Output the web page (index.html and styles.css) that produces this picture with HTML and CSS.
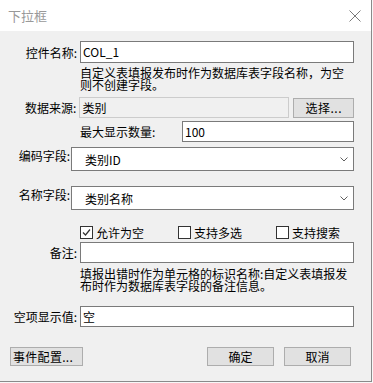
FILE: index.html
```html
<!DOCTYPE html>
<html lang="zh-CN">
  <head>
    <meta charset="UTF-8" />
    <title>下拉框</title>
    <link rel="stylesheet" href="styles.css">
  </head>
  <body>
    <div class="dialog">
      <div class="titlebar">
        <span class="title">下拉框</span>
        <svg class="close" width="12" height="12" viewBox="0 0 12 12">
          <path d="M0.5 0.5 L11.5 11.5 M11.5 0.5 L0.5 11.5" stroke="#7a7a7a" stroke-width="1" fill="none" />
        </svg>
      </div>

      <div class="content">
        <!-- 控件名称 -->
        <div class="row row-name">
          <label class="label">控件名称:</label>
          <div class="input">COL_1</div>
        </div>
        <p class="help help-name">自定义表填报发布时作为数据库表字段名称，为空<br>则不创建字段。</p>

        <!-- 数据来源 -->
        <div class="row row-source">
          <label class="label">数据来源:</label>
          <div class="input input-disabled">类别</div>
          <button class="btn btn-pick">选择...</button>
        </div>

        <div class="row row-max">
          <label class="label-max">最大显示数量:</label>
          <div class="input input-max">100</div>
        </div>

        <!-- 字段选择 -->
        <div class="row row-code">
          <label class="label-field">编码字段:</label>
          <div class="select">
            <span>类别ID</span>
            <svg class="arrow" width="8" height="5" viewBox="0 0 8 5">
              <path d="M0.5 0.5 L4 4 L7.5 0.5" stroke="#606060" fill="none" />
            </svg>
          </div>
        </div>

        <div class="row row-title">
          <label class="label-field">名称字段:</label>
          <div class="select">
            <span>类别名称</span>
            <svg class="arrow" width="8" height="5" viewBox="0 0 8 5">
              <path d="M0.5 0.5 L4 4 L7.5 0.5" stroke="#606060" fill="none" />
            </svg>
          </div>
        </div>

        <div class="row row-checks">
          <span class="check check-empty">
            <span class="box">
              <svg width="11" height="11" viewBox="0 0 11 11">
                <path d="M2 5.5 L4.5 8 L9 2.5" stroke="#333" stroke-width="1.2" fill="none" />
              </svg>
            </span>允许为空
          </span>
          <span class="check check-multi"><span class="box"></span>支持多选</span>
          <span class="check check-search"><span class="box"></span>支持搜索</span>
        </div>

        <!-- 备注 -->
        <div class="row row-remark">
          <label class="label">备注:</label>
          <div class="input"></div>
        </div>
        <p class="help help-remark">填报出错时作为单元格的标识名称:自定义表填报发<br>布时作为数据库表字段的备注信息。</p>

        <div class="row row-blank">
          <label class="label">空项显示值:</label>
          <div class="input">空</div>
        </div>

        <!-- 底部按钮 -->
        <div class="footer">
          <button class="btn btn-event">事件配置...</button>
          <div class="footer-right">
            <button class="btn btn-action">确定</button>
            <button class="btn btn-action">取消</button>
          </div>
        </div>
      </div>
    </div>
  </body>
</html>
```

FILE: styles.css
```css
body {
  margin: 0;
  background-color: #f7f7f7;
  font-family: "Noto Sans CJK SC", "Liberation Sans", sans-serif;
  font-size: 12px;
  color: #000;
}

p {
  margin: 0;
}

.dialog {
  width: 371px;
  height: 381px;
  background-color: #f0f0f0;
  border-right: 1px solid #8a8a8a;
  border-bottom: 1px solid #8a8a8a;
}

.titlebar {
  display: flex;
  align-items: center;
  justify-content: space-between;
  height: 31px;
  padding: 0 10px 0 8px;
  background-color: #fff;
}

.title {
  font-size: 13px;
  color: #999;
}

.close {
  display: block;
}

.content {
  padding: 10px 17px 0 0;
}

.row {
  display: flex;
  align-items: center;
}

.label {
  width: 77px;
  margin-right: 3px;
  text-align: right;
  white-space: nowrap;
}

.input {
  box-sizing: border-box;
  flex: 1;
  height: 21px;
  padding: 0 2px;
  line-height: 19px;
  background-color: #fff;
  border: 1px solid #7a7a7a;
  white-space: nowrap;
}

.row-name .input {
  height: 22px;
  line-height: 20px;
}

.input-disabled {
  flex: none;
  width: 210px;
  background-color: #f0f0f0;
  border-color: #cccccc;
}

.help {
  margin: 4px 0 0 80px;
  line-height: 12px;
  white-space: nowrap;
}

.help-remark {
  margin-top: 5px;
}

.btn {
  box-sizing: border-box;
  height: 19px;
  padding: 0;
  font-family: inherit;
  font-size: 12px;
  line-height: 17px;
  background-color: #e1e1e1;
  border: 1px solid #adadad;
  color: #000;
}

.btn-pick {
  width: 61px;
  height: 20px;
  margin-left: 4px;
  letter-spacing: 0.5px;
}

.row-source {
  margin-top: 6px;
}

.row-max {
  margin-top: 3px;
  padding-left: 80px;
}

.label-max {
  width: 102px;
  white-space: nowrap;
}

.row-code {
  margin-top: 5px;
  align-items: flex-start;
}

.row-title {
  margin-top: 15px;
  align-items: flex-start;
}

.label-field {
  width: 71px;
  padding: 1px 1px 0 0;
  box-sizing: border-box;
  text-align: right;
  line-height: 16px;
  white-space: nowrap;
}

.select {
  box-sizing: border-box;
  flex: 1;
  display: flex;
  align-items: center;
  justify-content: space-between;
  height: 24px;
  padding: 0 5px 0 13px;
  background-color: #fff;
  border: 1px solid #7a7a7a;
}

.arrow {
  display: block;
}

.row-checks {
  margin-top: 15px;
  padding-left: 80px;
  height: 14px;
}

.check {
  display: flex;
  align-items: center;
  white-space: nowrap;
}

.check-empty {
  width: 98px;
}

.check-multi {
  width: 98px;
}

.box {
  box-sizing: border-box;
  display: flex;
  align-items: center;
  justify-content: center;
  width: 13px;
  height: 13px;
  margin-right: 3px;
  background-color: #fff;
  border: 1px solid #333;
}

.row-remark {
  margin-top: 3px;
}

.row-blank {
  margin-top: 14px;
}

.footer {
  display: flex;
  justify-content: space-between;
  margin-top: 20px;
  padding-left: 10px;
}

.btn-event {
  width: 73px;
  padding-left: 2px;
  text-align: left;
  letter-spacing: 0.3px;
}

.footer-right {
  display: flex;
  gap: 10px;
  padding-right: 3px;
}

.btn-action {
  width: 67px;
}
```
